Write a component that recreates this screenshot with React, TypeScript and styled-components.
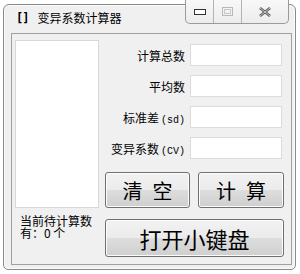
import styled, { createGlobalStyle } from "styled-components";

const GlobalStyle = createGlobalStyle`
  html, body {
    margin: 0;
    padding: 0;
    background: #ffffff;
  }
  body {
    font-family: "Noto Sans CJK SC", "DejaVu Sans", sans-serif;
    font-size: 12px;
    color: #000;
  }
`;

const Window = styled.div`
  box-sizing: border-box;
  width: 293px;
  height: 266px;
  margin: 4px 0 0 3px;
  border: 1px solid #8a8a8a;
  border-radius: 6px 6px 5px 5px;
  background: #f0f0f0;
  box-shadow: inset 0 0 0 1px #fbfbfb;
  display: flex;
  flex-direction: column;
  padding: 0 3px 4px 7px;
`;

const TitleBar = styled.div`
  height: 28px;
  display: flex;
  align-items: flex-start;
  padding-left: 5px;
`;

const Title = styled.div`
  margin-top: 6px;
  display: flex;
  align-items: center;
  gap: 9px;
  font-size: 12px;
  line-height: 14px;
`;

const AppIcon = styled.span`
  font-family: "DejaVu Sans Mono", monospace;
  font-weight: bold;
  font-size: 12px;
  letter-spacing: -1px;
`;

const Captions = styled.div`
  margin-left: auto;
  margin-top: -5px;
  margin-right: 3px;
  display: flex;
  height: 23px;
  border: 1px solid #9a9a9a;
  border-top: none;
  border-radius: 0 0 5px 5px;
  background: linear-gradient(#f8f8f8, #ececec);
  position: relative;
  z-index: 1;
`;

const CaptionButton = styled.div<{ w: number; last?: boolean }>`
  width: ${(p) => p.w}px;
  display: flex;
  align-items: center;
  justify-content: center;
  border-right: ${(p) => (p.last ? "none" : "1px solid #b4b4b4")};
`;

const Client = styled.div`
  flex: 1;
  border: 1px solid #a0a0a0;
  display: flex;
  gap: 5px;
  padding: 6px 0 0 3px;
`;

const LeftColumn = styled.div`
  display: flex;
  flex-direction: column;
`;

const ListBox = styled.div`
  box-sizing: border-box;
  width: 84px;
  height: 168px;
  background: #fff;
  border: 1px solid #d8d8d8;
`;

const Status = styled.div`
  width: 80px;
  margin: 7px 0 0 5px;
  font-size: 12px;
  line-height: 12px;
  word-break: break-all;
`;

const Mono = styled.span`
  font-family: "Liberation Mono", monospace;
  font-size: 10px;
  margin-left: 2px;
`;

const RightColumn = styled.div`
  width: 179px;
  margin-top: 4px;
  display: flex;
  flex-direction: column;
`;

const Fields = styled.div`
  display: flex;
  flex-direction: column;
  gap: 9px;
  padding-right: 2px;
`;

const Row = styled.div`
  display: flex;
  align-items: center;
  justify-content: flex-end;
  gap: 5px;
  height: 22px;
`;

const Label = styled.span`
  font-size: 12px;
  white-space: nowrap;
`;

const Input = styled.div`
  box-sizing: border-box;
  width: 92px;
  height: 22px;
  background: #fff;
  border: 1px solid #dcdcdc;
`;

const ButtonRow = styled.div`
  display: flex;
  gap: 8px;
  margin-top: 13px;
`;

const Button = styled.div<{ w: number; h: number; size: number }>`
  box-sizing: border-box;
  width: ${(p) => p.w}px;
  height: ${(p) => p.h}px;
  border: 1px solid #707070;
  border-radius: 3px;
  background: linear-gradient(#f2f2f2 0%, #ebebeb 50%, #dddddd 51%, #cfcfcf 100%);
  box-shadow: inset 0 0 0 1px #fcfcfc;
  display: flex;
  align-items: center;
  justify-content: center;
  font-size: ${(p) => p.size}px;
  letter-spacing: ${(p) => (p.size < 21 ? "0.5em" : "0")};
  text-indent: ${(p) => (p.size < 21 ? "0.5em" : "0")};
`;

const BigButton = styled(Button)`
  margin-top: 11px;
`;

export default function App() {
  return (
    <>
      <GlobalStyle />
      <Window>
        <TitleBar>
          <Title>
            <AppIcon>[]</AppIcon>
            <span>变异系数计算器</span>
          </Title>
          <Captions>
            <CaptionButton w={27}>
              <svg width="12" height="6" viewBox="0 0 12 6">
                <rect x="0.5" y="0.5" width="11" height="5" fill="#fff" stroke="#333" />
              </svg>
            </CaptionButton>
            <CaptionButton w={27}>
              <svg width="11" height="9" viewBox="0 0 11 9">
                <rect x="0.5" y="0.5" width="10" height="8" fill="none" stroke="#b8b8b8" />
                <rect x="2.5" y="2.5" width="6" height="4" fill="none" stroke="#c8c8c8" />
              </svg>
            </CaptionButton>
            <CaptionButton w={46} last>
              <svg width="12" height="10" viewBox="0 0 12 10">
                <path d="M1 1 L11 9 M11 1 L1 9" stroke="#555" strokeWidth="2.6" />
                <path d="M1 1 L11 9 M11 1 L1 9" stroke="#e8e8e8" strokeWidth="0.8" />
              </svg>
            </CaptionButton>
          </Captions>
        </TitleBar>
        <Client>
          <LeftColumn>
            <ListBox />
            <Status>当前待计算数有：0 个</Status>
          </LeftColumn>
          <RightColumn>
            <Fields>
              <Row>
                <Label>计算总数</Label>
                <Input />
              </Row>
              <Row>
                <Label>平均数</Label>
                <Input />
              </Row>
              <Row>
                <Label>标准差<Mono>(sd)</Mono></Label>
                <Input />
              </Row>
              <Row>
                <Label>变异系数<Mono>(CV)</Mono></Label>
                <Input />
              </Row>
            </Fields>
            <ButtonRow>
              <Button w={85} h={36} size={20}>清空</Button>
              <Button w={86} h={36} size={20}>计算</Button>
            </ButtonRow>
            <BigButton w={179} h={38} size={22}>打开小键盘</BigButton>
          </RightColumn>
        </Client>
      </Window>
    </>
  );
}
